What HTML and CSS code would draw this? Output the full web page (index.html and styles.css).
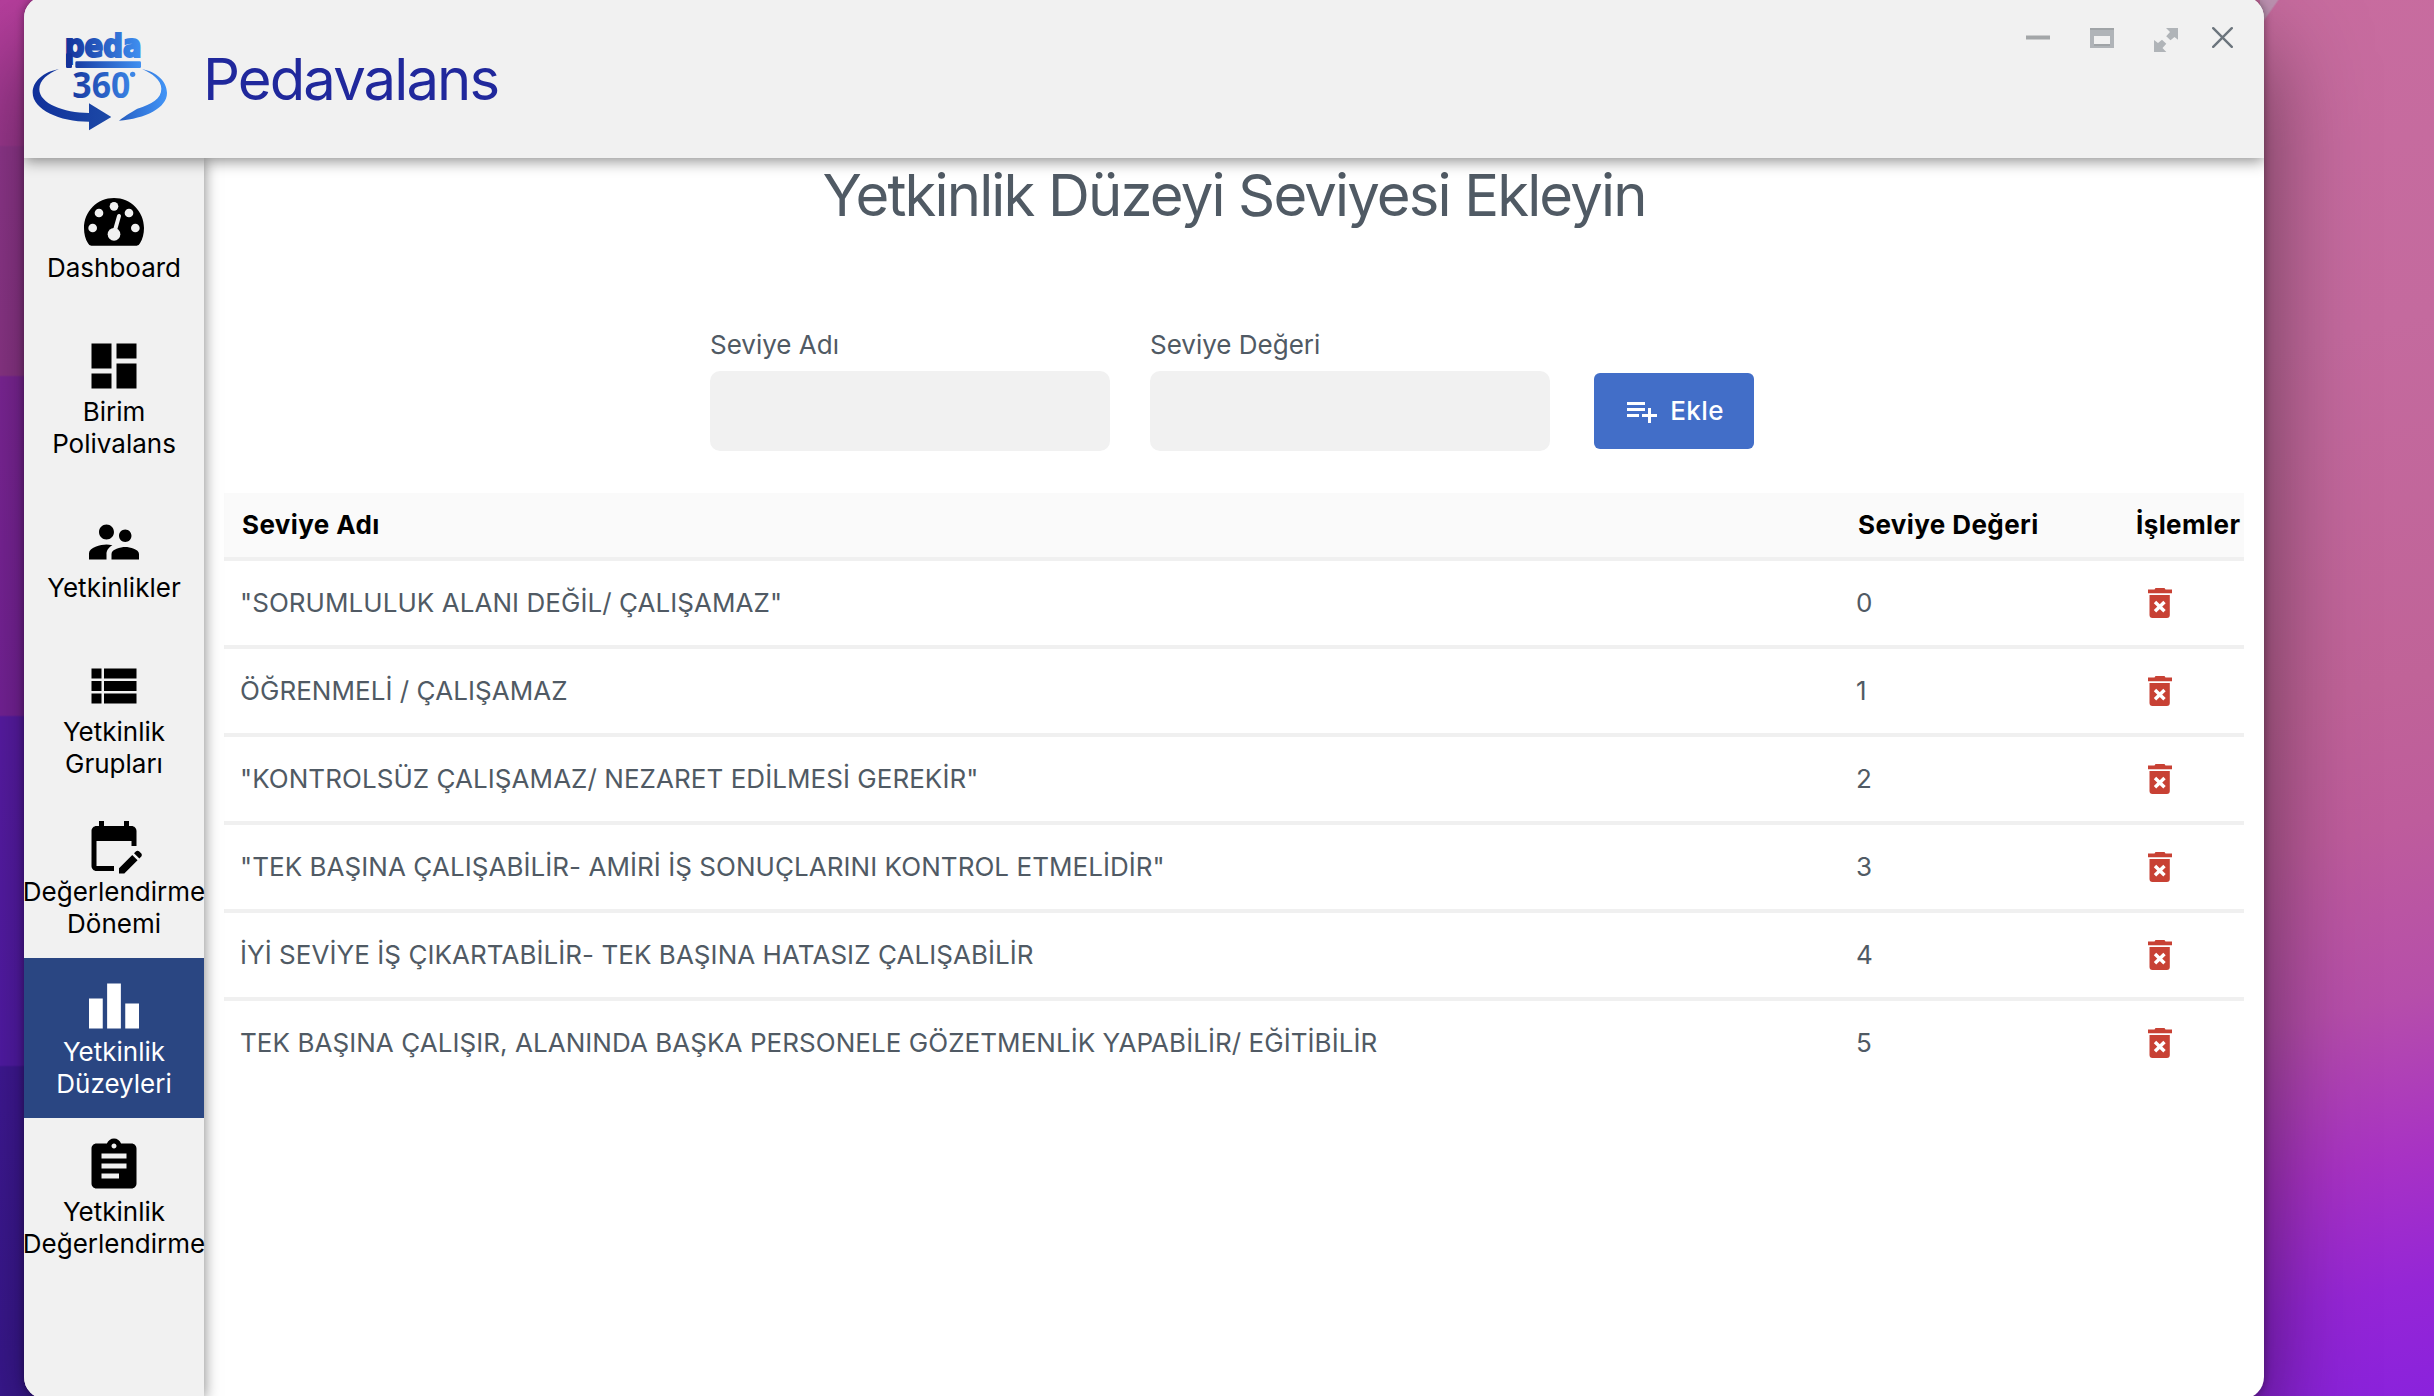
FILE: index.html
```html
<!DOCTYPE html>
<html lang="tr">
<head>
<meta charset="utf-8">
<title>Pedavalans</title>
<link rel="stylesheet" href="styles.css">
</head>
<body>
<svg class="defs" width="0" height="0" aria-hidden="true">
  <symbol id="trash" viewBox="0 0 24 30">
    <path fill="currentColor" d="M0 1.5h6.5L7.5 0h9l1 1.5H24v3.800H0zM1.500 7h20.300v20a3 3 0 0 1-3 3h-14.300a3 3 0 0 1-3-3z"/>
    <path d="M7 14l9.500 9.300M16.500 14L7 23.300" stroke="#fff" stroke-width="3.400" fill="none"/>
  </symbol>
</svg>
<div class="window">
  <header class="header">
    <svg class="logo" viewBox="30 30 420 310" role="img" aria-label="Peda 360">
      <defs>
        <linearGradient id="blue" gradientUnits="userSpaceOnUse" x1="140" y1="0" x2="362" y2="0">
          <stop offset="0" stop-color="#14329a"/><stop offset="1" stop-color="#3f8ff0"/>
        </linearGradient>
        <linearGradient id="sweep" gradientUnits="userSpaceOnUse" x1="40" y1="0" x2="440" y2="0">
          <stop offset="0" stop-color="#10309a"/><stop offset=".55" stop-color="#1c48a6"/><stop offset=".75" stop-color="#2f70d4"/><stop offset="1" stop-color="#4294f6"/>
        </linearGradient>
      </defs>
      <text class="logo-word" x="134" y="110" textLength="231" lengthAdjust="spacingAndGlyphs" fill="url(#blue)" stroke="url(#blue)">peda</text>
      <rect x="166" y="124" width="197" height="20" rx="4" fill="url(#blue)"/>
      <rect x="138" y="100" width="18" height="44" rx="4" fill="#14329a"/>
      <text class="logo-num" x="157" y="234" textLength="174" lengthAdjust="spacingAndGlyphs" fill="url(#blue)">360</text>
      <circle cx="338" cy="163" r="8" fill="#3c86e6"/>
      <path fill="url(#sweep)" d="M117 147C70 156 38 184 38 218C38 268 118 305 207 305V331L274 291L207 250V279C130 279 58 250 58 208C58 180 84 160 117 147z"/>
      <path fill="url(#sweep)" d="M366 147C410 156 441 184 441 219C441 264 376 296 297 302C320 284 338 274 352 266C396 252 424 236 424 206C424 180 396 160 366 147z"/>
    </svg>
    <h1 class="brand">Pedavalans</h1>
    <div class="controls">
      <svg width="24" height="26"><path fill="#a3a6a8" d="M0 9.500h24v4H0z"/></svg>
      <svg width="24" height="26"><path fill="#b0b4b8" fill-rule="evenodd" d="M0 2h24v20H0zM4 10v8h16v-8z"/><path fill="#a0a4a7" d="M0 2h24v2H0zM4 18h16v2H4z"/></svg>
      <svg width="24" height="26"><path fill="#b0b4b8" d="M12 2h12.300v12L20.500 11l-4 3.200-4.300-4L16 6zM0 14l4 3 4-3.200 4.300 4L8.500 22l3.800 4H0z"/></svg>
      <svg class="close" width="21" height="26"><path fill="none" stroke="#6c757d" stroke-width="2.400" stroke-linecap="round" d="M1.200 2.200l18.600 18.600M19.800 2.200L1.200 20.800"/></svg>
    </div>
  </header>
  <div class="body">
    <nav class="sidebar">
      <a class="item">
        <svg viewBox="0 0 180 180"><path fill-rule="evenodd" fill="currentColor" d="M90 18C40 18 0 58 0 108C0 125 4 141 12 154Q15 161 22 161H158Q165 161 168 154C176 141 180 125 180 108C180 58 140 18 90 18z"/><g fill="#f1f1f1"><circle cx="26" cy="108" r="13"/><circle cx="45" cy="63" r="13"/><circle cx="90" cy="43" r="13"/><circle cx="135" cy="63" r="13"/><circle cx="154" cy="108" r="13"/><circle cx="90" cy="127" r="19"/></g><path d="M92 118L105 72" stroke="#f1f1f1" stroke-width="12" stroke-linecap="round"/></svg>
        <span>Dashboard</span>
      </a>
      <a class="item">
        <svg viewBox="0 0 24 24"><path fill="currentColor" d="M3 13h8V3H3v10zm0 8h8v-6H3v6zm10 0h8V11h-8v10zm0-18v6h8V3h-8z"/></svg>
        <span>Birim<br>Polivalans</span>
      </a>
      <a class="item">
        <svg viewBox="0 0 24 24"><path fill="currentColor" d="M16.500 12c1.380 0 2.490-1.120 2.490-2.500S17.880 7 16.500 7C15.120 7 14 8.120 14 9.500s1.120 2.500 2.500 2.500zM9 11c1.660 0 2.990-1.340 2.990-3S10.660 5 9 5C7.340 5 6 6.340 6 8s1.340 3 3 3zm7.500 3c-1.830 0-5.500.92-5.500 2.750V19h11v-2.250c0-1.830-3.670-2.750-5.500-2.750zM9 13c-2.330 0-7 1.170-7 3.500V19h7v-2.250c0-.85.33-2.340 2.370-3.470C10.500 13.100 9.660 13 9 13z"/></svg>
        <span>Yetkinlikler</span>
      </a>
      <a class="item">
        <svg viewBox="0 0 24 24"><path fill="currentColor" d="M3 14h4v-4H3v4zm0 5h4v-4H3v4zM3 9h4V5H3v4zm5 5h13v-4H8v4zm0 5h13v-4H8v4zM8 5v4h13V5H8z"/></svg>
        <span>Yetkinlik<br>Grupları</span>
      </a>
      <a class="item">
        <svg viewBox="0 0 24 24"><path fill="currentColor" d="M12 22H5c-1.110 0-2-.9-2-2l.01-14c0-1.100.88-2 1.990-2h1V2h2v2h8V2h2v2h1c1.100 0 2 .9 2 2v6h-2v-2H5v10h7v2zm10.130-5.010.71-.71c.39-.39.39-1.020 0-1.410l-.71-.71c-.39-.39-1.020-.39-1.410 0l-.71.71 2.120 2.120zm-.71.71-5.300 5.300H14v-2.120l5.300-5.300 2.120 2.120z"/></svg>
        <span>Değerlendirme<br>Dönemi</span>
      </a>
      <a class="item active">
        <svg viewBox="0 0 24 24"><path fill="currentColor" d="M7.500 21H2V9h5.500v12zm7.250-18h-5.500v18h5.500V3zM22 11h-5.500v10H22V11z"/></svg>
        <span>Yetkinlik<br>Düzeyleri</span>
      </a>
      <a class="item">
        <svg viewBox="0 0 24 24"><path fill="currentColor" d="M19 3h-4.180C14.400 1.840 13.300 1 12 1c-1.300 0-2.400.84-2.820 2H5c-1.100 0-2 .9-2 2v14c0 1.100.9 2 2 2h14c1.100 0 2-.9 2-2V5c0-1.100-.9-2-2-2zm-7 0c.55 0 1 .45 1 1s-.45 1-1 1-1-.45-1-1 .45-1 1-1zm2 14H7v-2h7v2zm3-4H7v-2h10v2zm0-4H7V7h10v2z"/></svg>
        <span>Yetkinlik<br>Değerlendirme</span>
      </a>
    </nav>
    <main class="main">
      <h2 class="heading">Yetkinlik Düzeyi Seviyesi Ekleyin</h2>
      <form class="form">
        <label class="field">Seviye Adı<input type="text"></label>
        <label class="field">Seviye Değeri<input type="text"></label>
        <button class="add" type="button">
          <svg width="36" height="36" viewBox="0 0 24 24"><path fill="currentColor" d="M14 10H2v2h12v-2zm0-4H2v2h12V6zm4 8v-4h-2v4h-4v2h4v4h2v-4h4v-2h-4zM2 16h8v-2H2v2z"/></svg>
          <span>Ekle</span>
        </button>
      </form>
      <table class="levels">
        <colgroup><col class="c-name"><col class="c-value"><col class="c-action"></colgroup>
        <thead><tr><th>Seviye Adı</th><th>Seviye Değeri</th><th class="last">İşlemler</th></tr></thead>
        <tbody>
          <tr><td>"SORUMLULUK ALANI DEĞİL/ ÇALIŞAMAZ"</td><td>0</td><td class="act"><svg><use href="#trash"/></svg></td></tr>
          <tr><td>ÖĞRENMELİ / ÇALIŞAMAZ</td><td>1</td><td class="act"><svg><use href="#trash"/></svg></td></tr>
          <tr><td>"KONTROLSÜZ ÇALIŞAMAZ/ NEZARET EDİLMESİ GEREKİR"</td><td>2</td><td class="act"><svg><use href="#trash"/></svg></td></tr>
          <tr><td>"TEK BAŞINA ÇALIŞABİLİR- AMİRİ İŞ SONUÇLARINI KONTROL ETMELİDİR"</td><td>3</td><td class="act"><svg><use href="#trash"/></svg></td></tr>
          <tr><td>İYİ SEVİYE İŞ ÇIKARTABİLİR- TEK BAŞINA HATASIZ ÇALIŞABİLİR</td><td>4</td><td class="act"><svg><use href="#trash"/></svg></td></tr>
          <tr><td>TEK BAŞINA ÇALIŞIR, ALANINDA BAŞKA PERSONELE GÖZETMENLİK YAPABİLİR/ EĞİTİBİLİR</td><td>5</td><td class="act"><svg><use href="#trash"/></svg></td></tr>
        </tbody>
      </table>
    </main>
  </div>
</div>
</body>
</html>
```
FILE: styles.css
```css
* { box-sizing: border-box; }

body {
  margin: 0;
  height: 1396px;
  overflow: hidden;
  display: flex;
  font: 400 26px/32px Inter, sans-serif;
  color: #505a64;
  background:
    linear-gradient(#b83f9e 0, #a83c9a 145px, #9c3b98 147px, #983a94 375px, #8a2aa6 377px, #8226a8 715px, #621fb6 717px, #5a1eb8 1065px, #461ba4 1067px, #3e1a9c 1396px) 0 0 / 60px 100% no-repeat,
    linear-gradient(125deg, #c094b4 0, #c094b4 14px, transparent 16px) 2260px 0 / 30px 30px no-repeat,
    linear-gradient(168deg, #c86c9f 0, #c46a9e 25%, #c06398 50%, #be5c9c 60%, #b64eaa 72%, #a832c4 83%, #9526d6 92%, #8a22dc 100%) 2200px 0 / 234px 100% no-repeat;
}

.defs { position: absolute; }

.window {
  width: 2240px;
  height: 1403px;
  margin: -4px 0 0 24px;
  flex: none;
  display: flex;
  flex-direction: column;
  overflow: hidden;
  border-radius: 22px;
  background: #fff;
  box-shadow: 0 0 8px rgba(0, 0, 0, .4), 0 50px 100px rgba(0, 0, 0, .52);
}

.header {
  position: relative;
  z-index: 2;
  flex: none;
  height: 162px;
  padding: 4px 31px 0 6px;
  display: flex;
  align-items: flex-start;
  background: #f1f1f1;
  box-shadow: 0 3px 14px rgba(0, 0, 0, .45);
}

.logo { width: 140px; height: 103.330px; margin-top: 30px; flex: none; overflow: visible; }
.logo-word { font: 700 94px "DejaVu Sans", sans-serif; stroke-width: 6px; }
.logo-num { font: 700 108px "Noto Sans", sans-serif; }

.brand {
  margin: 43px 0 0 33px;
  font-size: 58px;
  line-height: 72px;
  font-weight: 400;
  letter-spacing: -1.900px;
  color: #20289c;
}

.controls { margin: 26px 0 0 auto; display: flex; gap: 40px; }
.controls .close { margin-left: -6px; }

.body { flex: 1; display: flex; }

.sidebar {
  position: relative;
  z-index: 1;
  width: 180px;
  flex: none;
  background: #f1f1f1;
  box-shadow: 0 0 14px rgba(0, 0, 0, .5);
}

.item {
  height: 160px;
  display: flex;
  flex-direction: column;
  align-items: center;
  justify-content: center;
  text-align: center;
  white-space: nowrap;
  color: #000;
}
.item svg { width: 60px; height: 60px; flex: none; }
.item.active { background: #2a4682; color: #fff; }

.main { flex: 1; padding: 1px 20px 0; }

.heading {
  margin: 0;
  font-size: 58px;
  line-height: 72px;
  font-weight: 400;
  letter-spacing: -1.850px;
  text-align: center;
}

.form { margin: 98px 0 42px; padding-left: 486px; display: flex; align-items: flex-end; gap: 40px; }
.field { display: flex; flex-direction: column; gap: 10px; }
.field input { width: 400px; height: 80px; border: 0; border-radius: 10px; background: #f1f1f1; }

.add {
  width: 160px;
  height: 76px;
  margin: 0 0 2px 4px;
  padding: 0;
  display: flex;
  align-items: center;
  justify-content: center;
  gap: 10px;
  border: 0;
  border-radius: 6px;
  background: #426ec8;
  color: #fff;
  font: 500 26px/32px Inter, sans-serif;
  letter-spacing: .4px;
}

.levels { width: 2020px; table-layout: fixed; border-collapse: separate; border-spacing: 0; }
.c-name { width: 1616px; }
.c-value { width: 280px; }
.c-action { width: 124px; }
.levels th {
  height: 68px;
  padding: 0 0 0 18px;
  text-align: left;
  font-weight: 700;
  letter-spacing: .4px;
  color: #000;
  background: #fafafa;
  border-bottom: 4px solid #f0f0f0;
}
.levels th.last { padding-left: 16px; }
.levels td { height: 88px; padding: 0 0 0 16px; letter-spacing: .05px; border-bottom: 4px solid #f0f0f0; }
.levels tr:last-child td { border-bottom-color: transparent; }
.levels th { border-bottom-color: #f0f0f0; }
.levels .act { padding: 0 0 0 28px; color: #c84134; }
.act svg { display: block; width: 24px; height: 30px; }
```
